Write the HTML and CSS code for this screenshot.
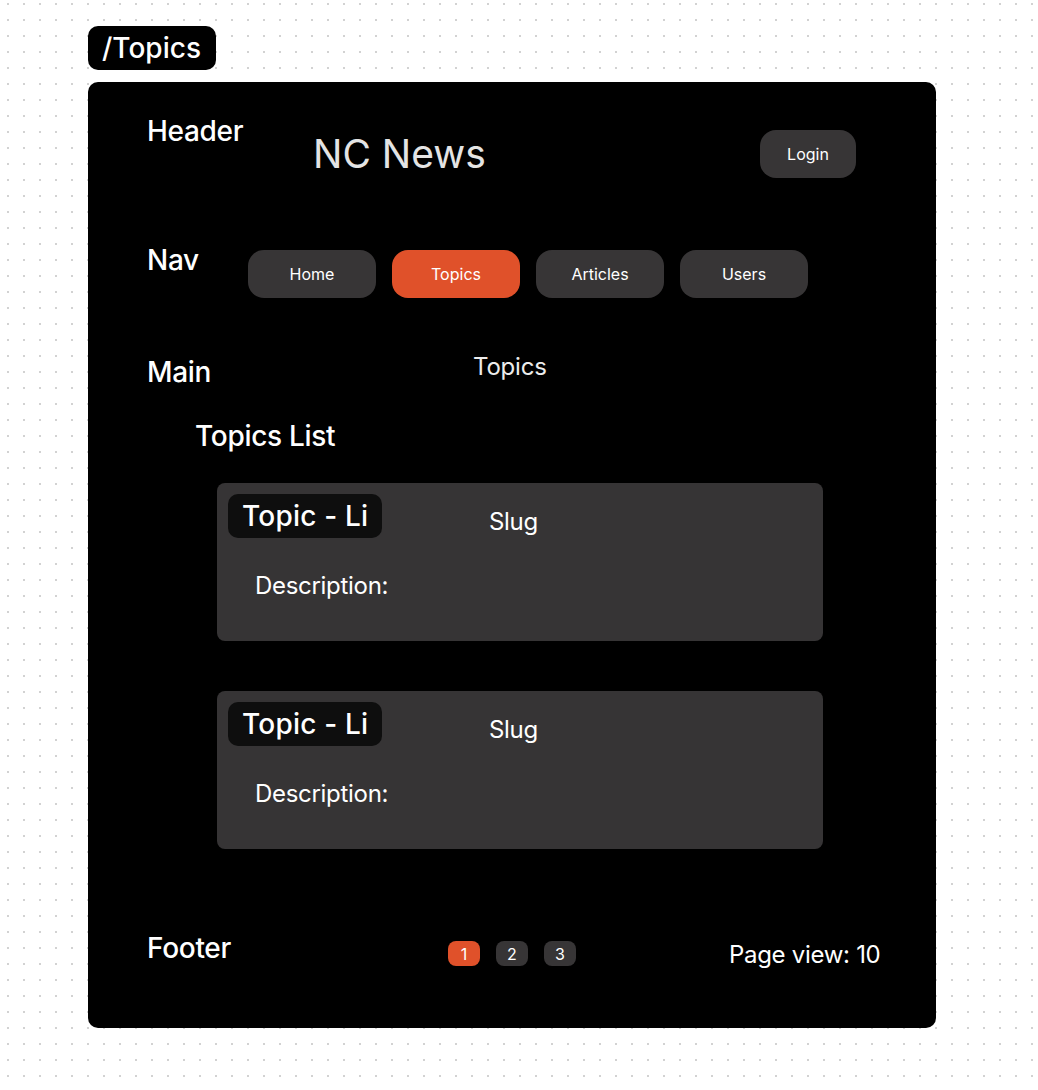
FILE: index.html
```html
<!DOCTYPE html>
<html>
<head>
<meta charset="utf-8">
<link rel="stylesheet" href="styles.css">
</head>
<body>
<div class="page">
  <div class="route">/Topics</div>
  <div class="frame">
    <section class="row header-row">
      <div class="label header-label">Header</div>
      <div class="header-content">
        <div class="site-title">NC News</div>
        <div class="btn login">Login</div>
      </div>
    </section>

    <section class="row nav-row">
      <div class="label nav-label">Nav</div>
      <nav class="nav">
        <div class="btn nav-btn">Home</div>
        <div class="btn nav-btn active">Topics</div>
        <div class="btn nav-btn">Articles</div>
        <div class="btn nav-btn">Users</div>
      </nav>
    </section>

    <section class="main">
      <div class="row main-row">
        <div class="label main-label">Main</div>
        <div class="main-title">Topics</div>
      </div>
      <div class="list-label">Topics List</div>
      <div class="cards">
        <div class="card">
          <div class="card-top">
            <div class="badge">Topic - Li</div>
            <div class="slug">Slug</div>
          </div>
          <div class="desc">Description:</div>
        </div>
        <div class="card">
          <div class="card-top">
            <div class="badge">Topic - Li</div>
            <div class="slug">Slug</div>
          </div>
          <div class="desc">Description:</div>
        </div>
      </div>
    </section>

    <section class="row footer-row">
      <div class="label footer-label">Footer</div>
      <div class="pages">
        <div class="pg active">1</div>
        <div class="pg">2</div>
        <div class="pg">3</div>
      </div>
      <div class="views">Page view: 10</div>
    </section>
  </div>
</div>
</body>
</html>
```

FILE: styles.css
```css
* { box-sizing: border-box; }

html, body {
  margin: 0;
  padding: 0;
}

body {
  width: 1038px;
  min-height: 1090px;
  font-family: Inter, "Noto Sans", sans-serif;
  background-color: #ffffff;
  background-image: radial-gradient(circle, #d2d2d2 1px, transparent 1.2px);
  background-size: 16px 16px;
  background-position: 0 -4px;
  color: #ffffff;
}

.page {
  padding: 26px 0 0 88px;
}

.route {
  display: inline-block;
  height: 44px;
  line-height: 44px;
  padding: 0 15px 0 14px;
  background: #000;
  color: #fff;
  font-size: 28px;
  font-weight: 500;
  border-radius: 10px;
}

.frame {
  margin-top: 12px;
  width: 848px;
  height: 946px;
  background: #000;
  border-radius: 10px;
  padding: 32px 80px 0 59px;
}

.row {
  display: flex;
  align-items: flex-start;
}

.label {
  font-size: 28px;
  font-weight: 500;
  line-height: 34px;
  letter-spacing: -0.3px;
  color: #fff;
  flex-shrink: 0;
}

.btn {
  height: 48px;
  border-radius: 16px;
  background: #373536;
  color: #fff;
  font-size: 16px;
  display: flex;
  align-items: center;
  justify-content: center;
}

/* Header */
.header-label { width: 166px; }

.header-content {
  flex: 1;
  display: flex;
  align-items: center;
  margin-top: 16px;
}

.site-title {
  flex: 1;
  font-size: 39px;
  font-weight: 400;
  color: #e4e4e4;
  line-height: 48px;
}

.login { width: 96px; }

/* Nav */
.nav-row { margin-top: 65px; }
.nav-label { width: 101px; }

.nav {
  display: flex;
  gap: 16px;
  margin-top: 7px;
}

.nav-btn { width: 128px; }
.nav-btn.active { background: #e0512a; }

/* Main */
.main { margin-top: 54px; }

.main-label { width: 326px; margin-top: 3px; }

.main-title {
  font-size: 24px;
  line-height: 29px;
  letter-spacing: -0.2px;
  color: #ececec;
}

.list-label {
  font-size: 28px;
  font-weight: 500;
  line-height: 34px;
  letter-spacing: -0.3px;
  margin: 30px 0 0 48px;
}

.cards {
  display: flex;
  flex-direction: column;
  gap: 50px;
  margin: 30px 0 0 70px;
}

.card {
  width: 606px;
  height: 158px;
  background: #363435;
  border-radius: 8px;
  padding: 11px;
}

.card-top {
  display: flex;
  align-items: flex-start;
}

.badge {
  width: 154px;
  height: 44px;
  line-height: 44px;
  padding-left: 14px;
  background: #0e0e0e;
  border-radius: 10px;
  font-size: 28px;
  font-weight: 500;
  letter-spacing: 0.2px;
  white-space: nowrap;
}

.slug {
  margin: 13px 0 0 107px;
  font-size: 24px;
  line-height: 29px;
  letter-spacing: -0.3px;
}

.desc {
  margin: 33px 0 0 27px;
  font-size: 24px;
  line-height: 29px;
  letter-spacing: -0.3px;
}

/* Footer */
.footer-row { margin-top: 81px; }
.footer-label { width: 301px; margin-top: 1px; }

.pages {
  display: flex;
  gap: 16px;
  margin-top: 11px;
}

.pg {
  width: 32px;
  height: 25px;
  border-radius: 8px;
  background: #373536;
  font-size: 16px;
  display: flex;
  align-items: center;
  justify-content: center;
}

.pg.active { background: #e0512a; }

.views {
  margin: 10px 0 0 153px;
  font-size: 24px;
  line-height: 29px;
  letter-spacing: -0.3px;
  white-space: nowrap;
}
```
